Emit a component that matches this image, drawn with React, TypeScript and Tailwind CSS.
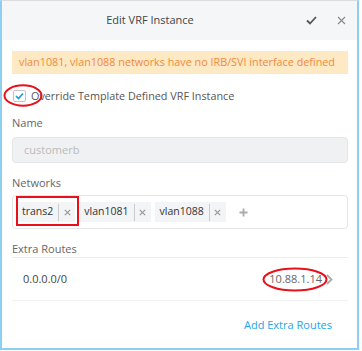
import React from "react";

const tags = ["trans2", "vlan1081", "vlan1088"];

const App = () => {
	return (
		<div
			className="w-[362px] h-[351px] bg-white"
			style={{ fontFamily: '"Open Sans", "Noto Sans", sans-serif' }}
		>
			<div className="relative w-[359px] h-[350px] border-x-2 border-b-2 border-t border-x-[#8ccff0] border-b-[#8ccff0] border-t-[#dcdcdc] bg-white">
				{/* header */}
				<div className="h-[39px] bg-[#f5f6f8] flex items-center relative">
					<div className="flex-1 text-center text-[11px] text-[#444] pr-[59px]">
						Edit VRF Instance
					</div>
					<div className="absolute right-[11px] top-0 h-full flex items-center gap-[20px]">
						<svg width="11" height="9" viewBox="0 0 11 9">
							<path d="M1 4.5 L4 7.5 L10 1" fill="none" stroke="#555" strokeWidth="1.8" />
						</svg>
						<svg width="9" height="9" viewBox="0 0 9 9">
							<path d="M1 1 L8 8 M8 1 L1 8" stroke="#888" strokeWidth="1.1" />
						</svg>
					</div>
				</div>

				<div className="pl-[10px] pr-[9px]">
					{/* warning */}
					<div className="mt-[11px] h-[23px] bg-[#fde9c4] text-[#f28a3c] text-[10.8px] flex items-center px-[7px] whitespace-nowrap">
						vlan1081, vlan1088 networks have no IRB/SVI interface defined
					</div>

					{/* checkbox */}
					<div className="flex items-center mt-[11px] h-[22px] relative">
						<div className="w-[13px] h-[12px] ml-[1px] border border-[#c4c4c4] rounded-[2px] bg-white flex items-center justify-center">
							<svg width="9" height="8" viewBox="0 0 9 8">
								<path d="M1 4 L3.5 6.5 L8 1.5" fill="none" stroke="#1a9ae0" strokeWidth="1.7" />
							</svg>
						</div>
						<span className="ml-[5px] text-[10.8px] text-[#555]">
							Override Template Defined VRF Instance
						</span>
						<svg
							className="absolute left-[-9px] top-[-1px]"
							width="40"
							height="23"
							viewBox="0 0 40 23"
						>
							<ellipse cx="20" cy="11.5" rx="18.5" ry="10.2" fill="none" stroke="#e8101a" strokeWidth="2" />
						</svg>
					</div>

					{/* name */}
					<div className="mt-[8px] h-[16px] leading-[16px] text-[11px] text-[#666]">Name</div>
					<div className="mt-[6px] h-[26px] bg-[#f0f1f2] border border-[#e4e5e6] rounded-[4px] flex items-center px-[11px] text-[11px] text-[#bbb]">
						customerb
					</div>

					{/* networks */}
					<div className="mt-[12px] h-[16px] leading-[16px] text-[11px] text-[#666]">Networks</div>
					<div className="mt-[4px] h-[34px] border border-[#e4e5e6] rounded-[4px] flex items-center pl-[4px] gap-[4px]">
						{tags.map((t, i) => (
							<div key={t} className="relative flex items-center h-[20px] bg-[#f3f4f5] text-[10.5px] text-[#333]">
								<span className="pl-[5px] pr-[5px]">{t}</span>
								<span className="w-px h-[17px] bg-[#ccc]" />
								<span className="w-[16px] flex items-center justify-center">
									<svg width="7" height="7" viewBox="0 0 7 7">
										<path d="M0.8 0.8 L6.2 6.2 M6.2 0.8 L0.8 6.2" stroke="#999" strokeWidth="1.2" />
									</svg>
								</span>
								{i === 0 && (
									<div className="absolute left-[-1px] top-[-6px] w-[63px] h-[30px] border-2 border-[#e8101a]" />
								)}
							</div>
						))}
						<svg className="ml-[9px]" width="9" height="9" viewBox="0 0 9 9">
							<path d="M4.5 0.5 V8.5 M0.5 4.5 H8.5" stroke="#aaa" strokeWidth="1.8" />
						</svg>
					</div>

					{/* extra routes */}
					<div className="mt-[12px] h-[17px] leading-[16px] text-[11px] text-[#666] border-b border-[#eeeeee]">
						Extra Routes
					</div>
					<div className="h-[43px] flex items-center justify-between border-b border-[#f2f2f2] pl-[11px] pr-[15px]">
						<span className="text-[11px] text-[#444]">0.0.0.0/0</span>
						<div className="relative flex items-center">
							<span className="text-[11px] text-[#666] mr-[4px]">10.88.1.14</span>
							<svg width="7" height="11" viewBox="0 0 7 11">
								<path d="M1 1 L5.5 5.5 L1 10" fill="none" stroke="#aaa" strokeWidth="1.8" />
							</svg>
							<svg
								className="absolute left-[-7px] top-[-4px]"
								width="66"
								height="25"
								viewBox="0 0 66 25"
							>
								<ellipse cx="33" cy="12.5" rx="31.5" ry="11" fill="none" stroke="#e8101a" strokeWidth="2" />
							</svg>
						</div>
					</div>
					<div className="flex justify-end pr-[16px] mt-[16px]">
						<span className="text-[11px] text-[#22a7ea]">Add Extra Routes</span>
					</div>
				</div>
			</div>
		</div>
	);
};

export default App;
